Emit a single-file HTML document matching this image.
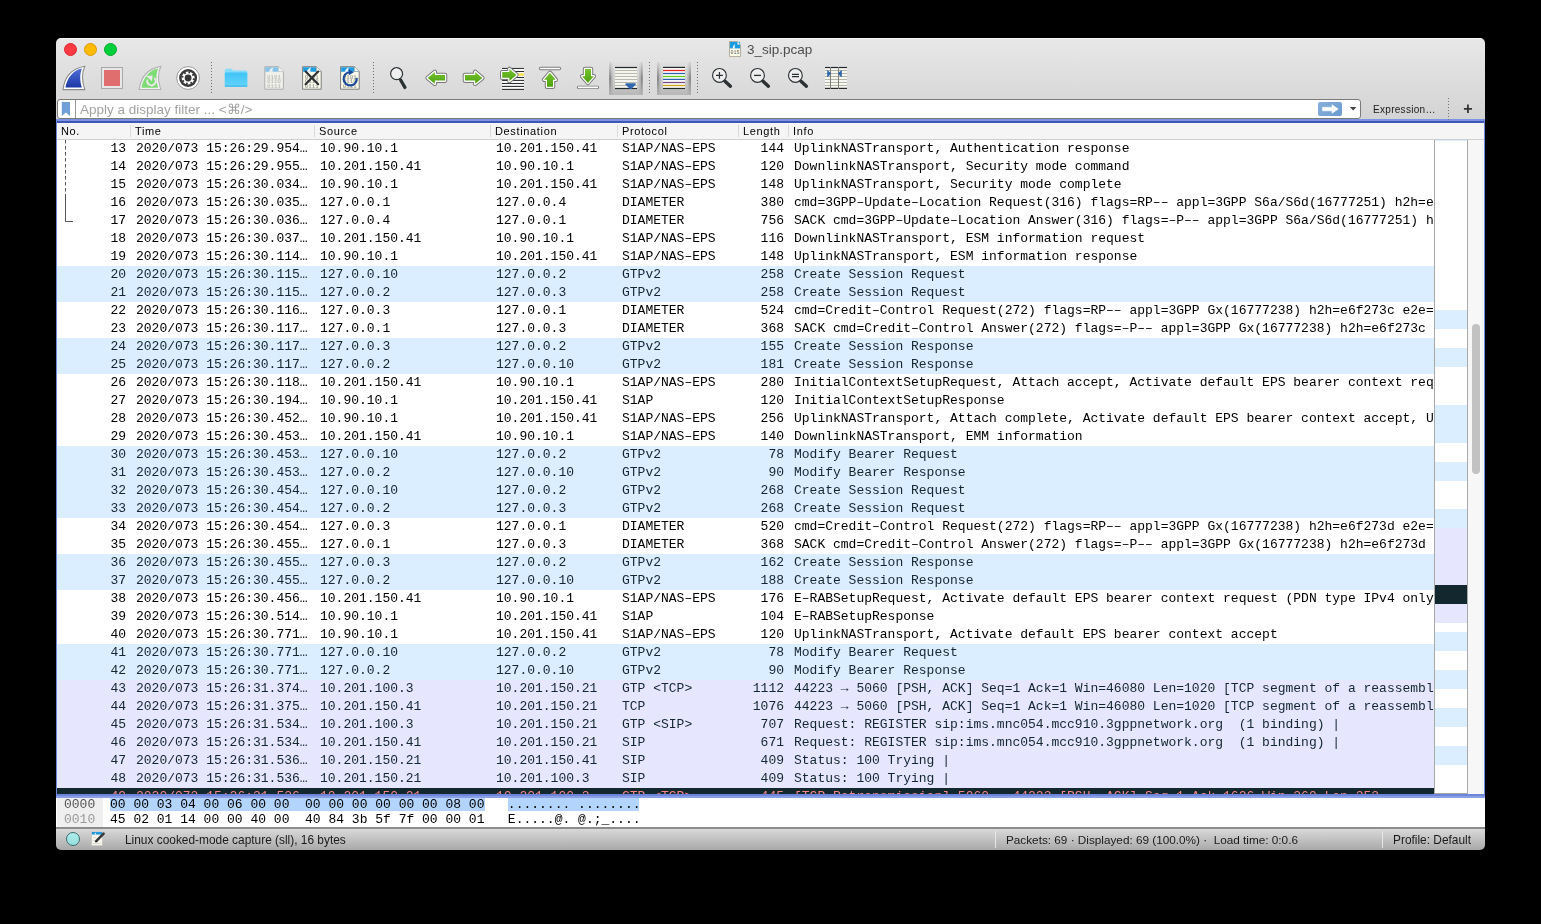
<!DOCTYPE html>
<html><head><meta charset="utf-8"><style>
html,body{margin:0;padding:0}
body{-webkit-font-smoothing:antialiased;width:1541px;height:924px;background:#000;position:relative;overflow:hidden;font-family:"Liberation Sans",sans-serif}
.abs{position:absolute}
#win{will-change:transform;position:absolute;left:0;top:0;width:1541px;height:924px;clip-path:inset(38px 56px 74px 56px round 5px);background:#fff}
#tb{position:absolute;left:56px;top:38px;width:1429px;height:82px;background:linear-gradient(#e8e8e8,#d3d3d3)}
#plist{position:absolute;left:57px;top:140px;width:1377px;height:654px;overflow:hidden;background:#fff}
.r{position:absolute;left:0;width:1377px;height:18px;font:13px/18px "Liberation Mono",monospace;white-space:pre}
.r span{position:absolute;top:0}
.no{right:1308px;text-align:right}
.ln{right:650px;text-align:right}
.hd{position:absolute;top:123px;font-size:11px;letter-spacing:0.65px;line-height:17px;color:#000;white-space:pre}
.hsep{position:absolute;top:125px;width:1px;height:12px;background:#dadada}
.mono{font-family:"Liberation Mono",monospace}
</style></head><body>
<div id="win">
 <div id="tb"></div>
 <div class="abs" style="left:56px;top:38px;width:1429px;height:1px;background:#f6f6f6"></div>
 <!-- title -->
 <div class="abs" style="left:747px;top:42px;font-size:13.5px;line-height:16px;color:#4d4d4d">3_sip.pcap</div>
 <!-- traffic lights -->
 <div class="abs" style="left:64px;top:43px;width:11px;height:11px;border-radius:50%;background:#fe3b45;border:0.5px solid #e2242c"></div>
 <div class="abs" style="left:84px;top:43px;width:11px;height:11px;border-radius:50%;background:#ffbb00;border:0.5px solid #e09a00"></div>
 <div class="abs" style="left:104px;top:43px;width:11px;height:11px;border-radius:50%;background:#00cf3c;border:0.5px solid #00a82a"></div>

 <!-- filter bar -->
 <div class="abs" style="left:57px;top:99px;width:1302px;height:18px;background:#fff;border:1px solid #7a7a7a;border-radius:3px"></div>
 <div class="abs" style="left:75px;top:100px;width:1px;height:18px;background:#9a9a9a"></div>
 <div class="abs" style="left:80px;top:101px;font-size:13.5px;line-height:18px;color:#a3a3a3;white-space:pre">Apply a display filter ... &lt;⌘/&gt;</div>
 <div class="abs" style="left:1318px;top:102px;width:24px;height:14px;border-radius:2px;background:linear-gradient(135deg,#8ab0dc,#6c9bd0)"></div>
 <div class="abs" style="left:1373px;top:102px;font-size:10px;letter-spacing:0.3px;line-height:16px;color:#1a1a1a;white-space:pre">Expression…</div>
 <div class="abs" style="left:1468px;top:98px;font-size:16px;line-height:22px;font-weight:bold;color:#333;transform:translateX(-50%)">+</div>

 <!-- focus ring -->
 <div class="abs" style="left:56px;top:119px;width:1429px;height:2px;background:#7b93e4"></div>
 <div class="abs" style="left:56px;top:121px;width:1429px;height:2px;background:#3f58b5"></div>
 <div class="abs" style="left:56px;top:121px;width:1px;height:677px;background:#6f88dc"></div>
 <div class="abs" style="left:1484px;top:121px;width:1px;height:677px;background:#6f88dc"></div>

 <!-- header -->
 <div class="abs" style="left:57px;top:123px;width:1427px;height:16px;background:#f5f5f5"></div>
 <div class="abs" style="left:57px;top:139px;width:1427px;height:1px;background:#cfcfcf"></div>
 <div class="hd" style="left:61px">No.</div>
 <div class="hd" style="left:135px">Time</div>
 <div class="hd" style="left:319px">Source</div>
 <div class="hd" style="left:495px">Destination</div>
 <div class="hd" style="left:622px">Protocol</div>
 <div class="hd" style="left:743px">Length</div>
 <div class="hd" style="left:793px">Info</div>
 <div class="hsep" style="left:130px"></div>
 <div class="hsep" style="left:314px"></div>
 <div class="hsep" style="left:490px"></div>
 <div class="hsep" style="left:617px"></div>
 <div class="hsep" style="left:738px"></div>
 <div class="hsep" style="left:788px"></div>

 <!-- packet list -->
 <div id="plist">
<div class="r" style="top:0px;background:#ffffff;color:#000000"><span class="no">13</span><span class="c" style="left:79px">2020/073 15:26:29.954…</span><span class="c" style="left:263px">10.90.10.1</span><span class="c" style="left:439px">10.201.150.41</span><span class="c" style="left:565px">S1AP/NAS–EPS</span><span class="ln">144</span><span class="c" style="left:737px">UplinkNASTransport, Authentication response</span></div>
<div class="r" style="top:18px;background:#ffffff;color:#000000"><span class="no">14</span><span class="c" style="left:79px">2020/073 15:26:29.955…</span><span class="c" style="left:263px">10.201.150.41</span><span class="c" style="left:439px">10.90.10.1</span><span class="c" style="left:565px">S1AP/NAS–EPS</span><span class="ln">120</span><span class="c" style="left:737px">DownlinkNASTransport, Security mode command</span></div>
<div class="r" style="top:36px;background:#ffffff;color:#000000"><span class="no">15</span><span class="c" style="left:79px">2020/073 15:26:30.034…</span><span class="c" style="left:263px">10.90.10.1</span><span class="c" style="left:439px">10.201.150.41</span><span class="c" style="left:565px">S1AP/NAS–EPS</span><span class="ln">148</span><span class="c" style="left:737px">UplinkNASTransport, Security mode complete</span></div>
<div class="r" style="top:54px;background:#ffffff;color:#000000"><span class="no">16</span><span class="c" style="left:79px">2020/073 15:26:30.035…</span><span class="c" style="left:263px">127.0.0.1</span><span class="c" style="left:439px">127.0.0.4</span><span class="c" style="left:565px">DIAMETER</span><span class="ln">380</span><span class="c" style="left:737px">cmd=3GPP–Update–Location Request(316) flags=RP–– appl=3GPP S6a/S6d(16777251) h2h=e6f273b e2e=</span></div>
<div class="r" style="top:72px;background:#ffffff;color:#000000"><span class="no">17</span><span class="c" style="left:79px">2020/073 15:26:30.036…</span><span class="c" style="left:263px">127.0.0.4</span><span class="c" style="left:439px">127.0.0.1</span><span class="c" style="left:565px">DIAMETER</span><span class="ln">756</span><span class="c" style="left:737px">SACK cmd=3GPP–Update–Location Answer(316) flags=–P–– appl=3GPP S6a/S6d(16777251) h2h=e6f273b</span></div>
<div class="r" style="top:90px;background:#ffffff;color:#000000"><span class="no">18</span><span class="c" style="left:79px">2020/073 15:26:30.037…</span><span class="c" style="left:263px">10.201.150.41</span><span class="c" style="left:439px">10.90.10.1</span><span class="c" style="left:565px">S1AP/NAS–EPS</span><span class="ln">116</span><span class="c" style="left:737px">DownlinkNASTransport, ESM information request</span></div>
<div class="r" style="top:108px;background:#ffffff;color:#000000"><span class="no">19</span><span class="c" style="left:79px">2020/073 15:26:30.114…</span><span class="c" style="left:263px">10.90.10.1</span><span class="c" style="left:439px">10.201.150.41</span><span class="c" style="left:565px">S1AP/NAS–EPS</span><span class="ln">148</span><span class="c" style="left:737px">UplinkNASTransport, ESM information response</span></div>
<div class="r" style="top:126px;background:#daeeff;color:#12272e"><span class="no">20</span><span class="c" style="left:79px">2020/073 15:26:30.115…</span><span class="c" style="left:263px">127.0.0.10</span><span class="c" style="left:439px">127.0.0.2</span><span class="c" style="left:565px">GTPv2</span><span class="ln">258</span><span class="c" style="left:737px">Create Session Request</span></div>
<div class="r" style="top:144px;background:#daeeff;color:#12272e"><span class="no">21</span><span class="c" style="left:79px">2020/073 15:26:30.115…</span><span class="c" style="left:263px">127.0.0.2</span><span class="c" style="left:439px">127.0.0.3</span><span class="c" style="left:565px">GTPv2</span><span class="ln">258</span><span class="c" style="left:737px">Create Session Request</span></div>
<div class="r" style="top:162px;background:#ffffff;color:#000000"><span class="no">22</span><span class="c" style="left:79px">2020/073 15:26:30.116…</span><span class="c" style="left:263px">127.0.0.3</span><span class="c" style="left:439px">127.0.0.1</span><span class="c" style="left:565px">DIAMETER</span><span class="ln">524</span><span class="c" style="left:737px">cmd=Credit–Control Request(272) flags=RP–– appl=3GPP Gx(16777238) h2h=e6f273c e2e=e6f273c</span></div>
<div class="r" style="top:180px;background:#ffffff;color:#000000"><span class="no">23</span><span class="c" style="left:79px">2020/073 15:26:30.117…</span><span class="c" style="left:263px">127.0.0.1</span><span class="c" style="left:439px">127.0.0.3</span><span class="c" style="left:565px">DIAMETER</span><span class="ln">368</span><span class="c" style="left:737px">SACK cmd=Credit–Control Answer(272) flags=–P–– appl=3GPP Gx(16777238) h2h=e6f273c e2e=</span></div>
<div class="r" style="top:198px;background:#daeeff;color:#12272e"><span class="no">24</span><span class="c" style="left:79px">2020/073 15:26:30.117…</span><span class="c" style="left:263px">127.0.0.3</span><span class="c" style="left:439px">127.0.0.2</span><span class="c" style="left:565px">GTPv2</span><span class="ln">155</span><span class="c" style="left:737px">Create Session Response</span></div>
<div class="r" style="top:216px;background:#daeeff;color:#12272e"><span class="no">25</span><span class="c" style="left:79px">2020/073 15:26:30.117…</span><span class="c" style="left:263px">127.0.0.2</span><span class="c" style="left:439px">127.0.0.10</span><span class="c" style="left:565px">GTPv2</span><span class="ln">181</span><span class="c" style="left:737px">Create Session Response</span></div>
<div class="r" style="top:234px;background:#ffffff;color:#000000"><span class="no">26</span><span class="c" style="left:79px">2020/073 15:26:30.118…</span><span class="c" style="left:263px">10.201.150.41</span><span class="c" style="left:439px">10.90.10.1</span><span class="c" style="left:565px">S1AP/NAS–EPS</span><span class="ln">280</span><span class="c" style="left:737px">InitialContextSetupRequest, Attach accept, Activate default EPS bearer context request</span></div>
<div class="r" style="top:252px;background:#ffffff;color:#000000"><span class="no">27</span><span class="c" style="left:79px">2020/073 15:26:30.194…</span><span class="c" style="left:263px">10.90.10.1</span><span class="c" style="left:439px">10.201.150.41</span><span class="c" style="left:565px">S1AP</span><span class="ln">120</span><span class="c" style="left:737px">InitialContextSetupResponse</span></div>
<div class="r" style="top:270px;background:#ffffff;color:#000000"><span class="no">28</span><span class="c" style="left:79px">2020/073 15:26:30.452…</span><span class="c" style="left:263px">10.90.10.1</span><span class="c" style="left:439px">10.201.150.41</span><span class="c" style="left:565px">S1AP/NAS–EPS</span><span class="ln">256</span><span class="c" style="left:737px">UplinkNASTransport, Attach complete, Activate default EPS bearer context accept, UE</span></div>
<div class="r" style="top:288px;background:#ffffff;color:#000000"><span class="no">29</span><span class="c" style="left:79px">2020/073 15:26:30.453…</span><span class="c" style="left:263px">10.201.150.41</span><span class="c" style="left:439px">10.90.10.1</span><span class="c" style="left:565px">S1AP/NAS–EPS</span><span class="ln">140</span><span class="c" style="left:737px">DownlinkNASTransport, EMM information</span></div>
<div class="r" style="top:306px;background:#daeeff;color:#12272e"><span class="no">30</span><span class="c" style="left:79px">2020/073 15:26:30.453…</span><span class="c" style="left:263px">127.0.0.10</span><span class="c" style="left:439px">127.0.0.2</span><span class="c" style="left:565px">GTPv2</span><span class="ln">78</span><span class="c" style="left:737px">Modify Bearer Request</span></div>
<div class="r" style="top:324px;background:#daeeff;color:#12272e"><span class="no">31</span><span class="c" style="left:79px">2020/073 15:26:30.453…</span><span class="c" style="left:263px">127.0.0.2</span><span class="c" style="left:439px">127.0.0.10</span><span class="c" style="left:565px">GTPv2</span><span class="ln">90</span><span class="c" style="left:737px">Modify Bearer Response</span></div>
<div class="r" style="top:342px;background:#daeeff;color:#12272e"><span class="no">32</span><span class="c" style="left:79px">2020/073 15:26:30.454…</span><span class="c" style="left:263px">127.0.0.10</span><span class="c" style="left:439px">127.0.0.2</span><span class="c" style="left:565px">GTPv2</span><span class="ln">268</span><span class="c" style="left:737px">Create Session Request</span></div>
<div class="r" style="top:360px;background:#daeeff;color:#12272e"><span class="no">33</span><span class="c" style="left:79px">2020/073 15:26:30.454…</span><span class="c" style="left:263px">127.0.0.2</span><span class="c" style="left:439px">127.0.0.3</span><span class="c" style="left:565px">GTPv2</span><span class="ln">268</span><span class="c" style="left:737px">Create Session Request</span></div>
<div class="r" style="top:378px;background:#ffffff;color:#000000"><span class="no">34</span><span class="c" style="left:79px">2020/073 15:26:30.454…</span><span class="c" style="left:263px">127.0.0.3</span><span class="c" style="left:439px">127.0.0.1</span><span class="c" style="left:565px">DIAMETER</span><span class="ln">520</span><span class="c" style="left:737px">cmd=Credit–Control Request(272) flags=RP–– appl=3GPP Gx(16777238) h2h=e6f273d e2e=e6f273d</span></div>
<div class="r" style="top:396px;background:#ffffff;color:#000000"><span class="no">35</span><span class="c" style="left:79px">2020/073 15:26:30.455…</span><span class="c" style="left:263px">127.0.0.1</span><span class="c" style="left:439px">127.0.0.3</span><span class="c" style="left:565px">DIAMETER</span><span class="ln">368</span><span class="c" style="left:737px">SACK cmd=Credit–Control Answer(272) flags=–P–– appl=3GPP Gx(16777238) h2h=e6f273d e2e=</span></div>
<div class="r" style="top:414px;background:#daeeff;color:#12272e"><span class="no">36</span><span class="c" style="left:79px">2020/073 15:26:30.455…</span><span class="c" style="left:263px">127.0.0.3</span><span class="c" style="left:439px">127.0.0.2</span><span class="c" style="left:565px">GTPv2</span><span class="ln">162</span><span class="c" style="left:737px">Create Session Response</span></div>
<div class="r" style="top:432px;background:#daeeff;color:#12272e"><span class="no">37</span><span class="c" style="left:79px">2020/073 15:26:30.455…</span><span class="c" style="left:263px">127.0.0.2</span><span class="c" style="left:439px">127.0.0.10</span><span class="c" style="left:565px">GTPv2</span><span class="ln">188</span><span class="c" style="left:737px">Create Session Response</span></div>
<div class="r" style="top:450px;background:#ffffff;color:#000000"><span class="no">38</span><span class="c" style="left:79px">2020/073 15:26:30.456…</span><span class="c" style="left:263px">10.201.150.41</span><span class="c" style="left:439px">10.90.10.1</span><span class="c" style="left:565px">S1AP/NAS–EPS</span><span class="ln">176</span><span class="c" style="left:737px">E–RABSetupRequest, Activate default EPS bearer context request (PDN type IPv4 only)</span></div>
<div class="r" style="top:468px;background:#ffffff;color:#000000"><span class="no">39</span><span class="c" style="left:79px">2020/073 15:26:30.514…</span><span class="c" style="left:263px">10.90.10.1</span><span class="c" style="left:439px">10.201.150.41</span><span class="c" style="left:565px">S1AP</span><span class="ln">104</span><span class="c" style="left:737px">E–RABSetupResponse</span></div>
<div class="r" style="top:486px;background:#ffffff;color:#000000"><span class="no">40</span><span class="c" style="left:79px">2020/073 15:26:30.771…</span><span class="c" style="left:263px">10.90.10.1</span><span class="c" style="left:439px">10.201.150.41</span><span class="c" style="left:565px">S1AP/NAS–EPS</span><span class="ln">120</span><span class="c" style="left:737px">UplinkNASTransport, Activate default EPS bearer context accept</span></div>
<div class="r" style="top:504px;background:#daeeff;color:#12272e"><span class="no">41</span><span class="c" style="left:79px">2020/073 15:26:30.771…</span><span class="c" style="left:263px">127.0.0.10</span><span class="c" style="left:439px">127.0.0.2</span><span class="c" style="left:565px">GTPv2</span><span class="ln">78</span><span class="c" style="left:737px">Modify Bearer Request</span></div>
<div class="r" style="top:522px;background:#daeeff;color:#12272e"><span class="no">42</span><span class="c" style="left:79px">2020/073 15:26:30.771…</span><span class="c" style="left:263px">127.0.0.2</span><span class="c" style="left:439px">127.0.0.10</span><span class="c" style="left:565px">GTPv2</span><span class="ln">90</span><span class="c" style="left:737px">Modify Bearer Response</span></div>
<div class="r" style="top:540px;background:#e7e6ff;color:#12272e"><span class="no">43</span><span class="c" style="left:79px">2020/073 15:26:31.374…</span><span class="c" style="left:263px">10.201.100.3</span><span class="c" style="left:439px">10.201.150.21</span><span class="c" style="left:565px">GTP &lt;TCP&gt;</span><span class="ln">1112</span><span class="c" style="left:737px">44223 → 5060 [PSH, ACK] Seq=1 Ack=1 Win=46080 Len=1020 [TCP segment of a reassembled PDU]</span></div>
<div class="r" style="top:558px;background:#e7e6ff;color:#12272e"><span class="no">44</span><span class="c" style="left:79px">2020/073 15:26:31.375…</span><span class="c" style="left:263px">10.201.150.41</span><span class="c" style="left:439px">10.201.150.21</span><span class="c" style="left:565px">TCP</span><span class="ln">1076</span><span class="c" style="left:737px">44223 → 5060 [PSH, ACK] Seq=1 Ack=1 Win=46080 Len=1020 [TCP segment of a reassembled PDU]</span></div>
<div class="r" style="top:576px;background:#e7e6ff;color:#12272e"><span class="no">45</span><span class="c" style="left:79px">2020/073 15:26:31.534…</span><span class="c" style="left:263px">10.201.100.3</span><span class="c" style="left:439px">10.201.150.21</span><span class="c" style="left:565px">GTP &lt;SIP&gt;</span><span class="ln">707</span><span class="c" style="left:737px">Request: REGISTER sip:ims.mnc054.mcc910.3gppnetwork.org  (1 binding) |</span></div>
<div class="r" style="top:594px;background:#e7e6ff;color:#12272e"><span class="no">46</span><span class="c" style="left:79px">2020/073 15:26:31.534…</span><span class="c" style="left:263px">10.201.150.41</span><span class="c" style="left:439px">10.201.150.21</span><span class="c" style="left:565px">SIP</span><span class="ln">671</span><span class="c" style="left:737px">Request: REGISTER sip:ims.mnc054.mcc910.3gppnetwork.org  (1 binding) |</span></div>
<div class="r" style="top:612px;background:#e7e6ff;color:#12272e"><span class="no">47</span><span class="c" style="left:79px">2020/073 15:26:31.536…</span><span class="c" style="left:263px">10.201.150.21</span><span class="c" style="left:439px">10.201.150.41</span><span class="c" style="left:565px">SIP</span><span class="ln">409</span><span class="c" style="left:737px">Status: 100 Trying |</span></div>
<div class="r" style="top:630px;background:#e7e6ff;color:#12272e"><span class="no">48</span><span class="c" style="left:79px">2020/073 15:26:31.536…</span><span class="c" style="left:263px">10.201.150.21</span><span class="c" style="left:439px">10.201.100.3</span><span class="c" style="left:565px">SIP</span><span class="ln">409</span><span class="c" style="left:737px">Status: 100 Trying |</span></div>
<div class="r" style="top:648px;background:#12272e;color:#f78787"><span class="no">49</span><span class="c" style="left:79px">2020/073 15:26:31.536…</span><span class="c" style="left:263px">10.201.150.21</span><span class="c" style="left:439px">10.201.100.3</span><span class="c" style="left:565px">GTP &lt;TCP&gt;</span><span class="ln">445</span><span class="c" style="left:737px">[TCP Retransmission] 5060 → 44223 [PSH, ACK] Seq=1 Ack=1626 Win=360 Len=353</span></div>
  <svg class="abs" style="left:0;top:0" width="30" height="100">
   <line x1="8.5" y1="0" x2="8.5" y2="53" stroke="#555" stroke-width="1" stroke-dasharray="3.5,2.5"/>
   <path d="M8.5 54 V81.5 H16" fill="none" stroke="#555" stroke-width="1"/>
  </svg>
 </div>

 <!-- minimap -->
 <div class="abs" style="left:1434px;top:140px;width:1px;height:654px;background:#a9a9a9"></div>
 <div class="abs" style="left:1467px;top:140px;width:1px;height:654px;background:#a9a9a9"></div>
 <div class="abs" style="left:1435px;top:140px;width:32px;height:653px;background:#fff;overflow:hidden">
<div style="position:absolute;left:0;top:0.0px;width:32px;height:1.0px;background:#daeeff"></div>
<div style="position:absolute;left:0;top:170.0px;width:32px;height:18.7px;background:#daeeff"></div>
<div style="position:absolute;left:0;top:208.0px;width:32px;height:19.0px;background:#daeeff"></div>
<div style="position:absolute;left:0;top:265.0px;width:32px;height:37.7px;background:#daeeff"></div>
<div style="position:absolute;left:0;top:322.0px;width:32px;height:18.8px;background:#daeeff"></div>
<div style="position:absolute;left:0;top:369.2px;width:32px;height:18.8px;background:#daeeff"></div>
<div style="position:absolute;left:0;top:388.0px;width:32px;height:57.0px;background:#e7e6ff"></div>
<div style="position:absolute;left:0;top:445.0px;width:32px;height:18.8px;background:#12272e"></div>
<div style="position:absolute;left:0;top:463.8px;width:32px;height:19.1px;background:#e7e6ff"></div>
<div style="position:absolute;left:0;top:492.0px;width:32px;height:18.8px;background:#daeeff"></div>
<div style="position:absolute;left:0;top:530.0px;width:32px;height:19.2px;background:#daeeff"></div>
<div style="position:absolute;left:0;top:568.0px;width:32px;height:18.8px;background:#daeeff"></div>
<div style="position:absolute;left:0;top:606.0px;width:32px;height:19.0px;background:#daeeff"></div>
 </div>
 <div class="abs" style="left:1435px;top:793px;width:33px;height:1px;background:#a9a9a9"></div>
 <div class="abs" style="left:1468px;top:140px;width:16px;height:654px;background:#f7f7f7"></div>
 <div class="abs" style="left:1472px;top:324px;width:8px;height:150px;border-radius:4px;background:#c2c2c2"></div>

 <!-- bottom focus ring -->
 <div class="abs" style="left:56px;top:794px;width:1429px;height:2px;background:#6d86dc"></div>
 <div class="abs" style="left:56px;top:796px;width:1429px;height:2px;background:#8aa0e6"></div>

 <!-- bytes pane -->
 <div class="abs" style="left:57px;top:798px;width:46px;height:29px;background:#efefef"></div>
 <div class="abs" style="left:110px;top:798px;width:375px;height:13px;background:#b3d5fd"></div>
 <div class="abs" style="left:508px;top:798px;width:131px;height:13px;background:#b3d5fd"></div>
 <div class="abs mono" style="left:64px;top:797px;font-size:13px;line-height:15px;white-space:pre;color:#555">0000</div>
 <div class="abs mono" style="left:64px;top:812px;font-size:13px;line-height:15px;white-space:pre;color:#9a9a9a">0010</div>
 <div class="abs mono" style="left:110px;top:797px;font-size:13px;line-height:15px;white-space:pre;color:#000">00 00 03 04 00 06 00 00  00 00 00 00 00 00 08 00   ........ ........</div>
 <div class="abs mono" style="left:110px;top:812px;font-size:13px;line-height:15px;white-space:pre;color:#000">45 02 01 14 00 00 40 00  40 84 3b 5f 7f 00 00 01   E.....@. @.;_....</div>

 <!-- status bar -->
 <div class="abs" style="left:56px;top:827px;width:1429px;height:2px;background:#8c8c8c"></div>
 <div class="abs" style="left:56px;top:829px;width:1429px;height:21px;background:linear-gradient(#d9d9d9,#a9a9a9)"></div>
 <div class="abs" style="left:66px;top:832px;width:12px;height:12px;border-radius:50%;background:linear-gradient(#b0ecec,#94dfdf);border:1px solid #3f6e6e"></div>
 <div class="abs" style="left:125px;top:832px;font-size:11.9px;line-height:16px;color:#1a1a1a;white-space:pre">Linux cooked-mode capture (sll), 16 bytes</div>
 <div class="abs" style="left:995px;top:831px;width:1px;height:17px;background:#e6e6e6"></div>
 <div class="abs" style="left:1006px;top:832px;font-size:11.75px;line-height:16px;color:#1a1a1a;white-space:pre">Packets: 69 · Displayed: 69 (100.0%) ·  Load time: 0:0.6</div>
 <div class="abs" style="left:1382px;top:831px;width:1px;height:17px;background:#e6e6e6"></div>
 <div class="abs" style="left:1393px;top:832px;font-size:11.9px;line-height:16px;color:#1a1a1a;white-space:pre">Profile: Default</div>

 <!-- toolbar icons -->
 <svg class="abs" style="left:0;top:0" width="1541" height="924" id="icons">
 <defs>
  <linearGradient id="gBlue" x1="0" y1="0" x2="0" y2="1"><stop offset="0" stop-color="#4f6fd6"/><stop offset="1" stop-color="#1d36a6"/></linearGradient>
  <linearGradient id="gGreen" x1="0" y1="0" x2="0" y2="1"><stop offset="0" stop-color="#78c232"/><stop offset="1" stop-color="#4ca20c"/></linearGradient>
  <linearGradient id="gPress" x1="0" y1="0" x2="0" y2="1"><stop offset="0" stop-color="#e0e0e0"/><stop offset="0.5" stop-color="#cfcfcf"/><stop offset="1" stop-color="#b8b8b8"/></linearGradient>
  <linearGradient id="gPressSide" x1="0" y1="0" x2="0" y2="1"><stop offset="0" stop-color="#000" stop-opacity="0.05"/><stop offset="0.5" stop-color="#000" stop-opacity="0.4"/><stop offset="1" stop-color="#000" stop-opacity="0.05"/></linearGradient>
  <linearGradient id="gFolder" x1="0" y1="0" x2="0" y2="1"><stop offset="0" stop-color="#3ec4f7"/><stop offset="1" stop-color="#66d3fc"/></linearGradient>
 </defs>
 <!-- 1 blue fin -->
 <path d="M63,89.6 C64.5,77 72,68.5 84.8,66.2 C81.8,72.5 81.5,80 84.8,89.6 Z" fill="#fff" stroke="#8c8c8c" stroke-width="1.1"/>
 <path d="M65.4,87.6 C67,77.5 73.5,70 81.9,68.4 C79.8,73.5 79.6,80.5 81.9,87.6 Z" fill="url(#gBlue)"/>
 <!-- 2 stop -->
 <rect x="101.5" y="67.5" width="21" height="21" fill="#e8e6e6" stroke="#a9a9a9" stroke-width="1"/>
 <rect x="104" y="70" width="16" height="16" fill="#e06e6e"/>
 <!-- 3 green fin -->
 <path d="M139.2,89.5 C140.7,77 148,68.7 160.8,66.4 C157.8,72.7 157.5,80 160.8,89.5 Z" fill="#f2f0f2" stroke="#b3b3b3" stroke-width="1.1"/>
 <path d="M141.5,87.7 C143,77.5 149.5,70 158.1,68.4 C156,73.5 155.8,80.5 158.1,87.7 Z" fill="#7ddd74"/>
 <path d="M147.6,79.5 A4.2,4.2 0 1 0 154.3,78" fill="none" stroke="#efe9ef" stroke-width="1.8"/>
 <path d="M146.2,76 L152.6,75.4 L152,81.2 Z" fill="#efe9ef"/>
 <!-- 4 gear -->
 <circle cx="188.1" cy="78" r="11.4" fill="#fff" stroke="#9a9a9a" stroke-width="1"/>
 <circle cx="188.1" cy="78" r="9" fill="#3a3a3a"/>
 <g transform="translate(188.1,78)"><circle r="6.5" fill="#fff"/><rect x="-0.9" y="-7" width="1.8" height="2.2" rx="0.5" fill="#3a3a3a" transform="rotate(12.3)"/><rect x="-0.9" y="-7" width="1.8" height="2.2" rx="0.5" fill="#3a3a3a" transform="rotate(57.3)"/><rect x="-0.9" y="-7" width="1.8" height="2.2" rx="0.5" fill="#3a3a3a" transform="rotate(102.3)"/><rect x="-0.9" y="-7" width="1.8" height="2.2" rx="0.5" fill="#3a3a3a" transform="rotate(147.3)"/><rect x="-0.9" y="-7" width="1.8" height="2.2" rx="0.5" fill="#3a3a3a" transform="rotate(192.3)"/><rect x="-0.9" y="-7" width="1.8" height="2.2" rx="0.5" fill="#3a3a3a" transform="rotate(237.3)"/><rect x="-0.9" y="-7" width="1.8" height="2.2" rx="0.5" fill="#3a3a3a" transform="rotate(282.3)"/><rect x="-0.9" y="-7" width="1.8" height="2.2" rx="0.5" fill="#3a3a3a" transform="rotate(327.3)"/></g>
 <circle cx="188.1" cy="78" r="3.4" fill="#353535"/>
 <!-- separators -->
 <line x1="211.5" y1="62" x2="211.5" y2="94" stroke="#6e6e6e" stroke-width="1" stroke-dasharray="1,2"/>
 <line x1="373.5" y1="62" x2="373.5" y2="94" stroke="#6e6e6e" stroke-width="1" stroke-dasharray="1,2"/>
 <line x1="649.5" y1="62" x2="649.5" y2="94" stroke="#6e6e6e" stroke-width="1" stroke-dasharray="1,2"/>
 <line x1="697.5" y1="62" x2="697.5" y2="94" stroke="#6e6e6e" stroke-width="1" stroke-dasharray="1,2"/>
 <!-- 5 folder -->
 <path d="M224.8,70.3 Q224.8,68.8 226.3,68.8 L231.5,68.8 L233,70.6 L245.8,70.6 Q247.3,70.6 247.3,72.1 L247.3,85.5 Q247.3,87 245.8,87 L226.3,87 Q224.8,87 224.8,85.5 Z" fill="#86dcfc"/>
 <path d="M224.8,73.5 Q224.8,72.4 226,72.4 L246.1,72.4 Q247.3,72.4 247.3,73.5 L247.3,85.5 Q247.3,87 245.8,87 L226.3,87 Q224.8,87 224.8,85.5 Z" fill="url(#gFolder)"/>
 <rect x="224.8" y="85.2" width="22.5" height="1.8" fill="#3db8ea" opacity="0.6"/>
 <!-- 6 doc faded -->
 <g>
  <path d="M264.8,66.7 L278.6,66.7 L283.4,71.5 L283.4,89.2 L264.8,89.2 Z" fill="#f0f0ea" stroke="#aeaeae" stroke-width="1"/>
  <path d="M265.3,67.2 L278.4,67.2 L282.9,71.7 L265.3,71.7 Z" fill="#86c3e8"/>
  <path d="M269,71.7 C269.5,69.6 271.2,68 273.4,67.6 C272.4,68.8 272.1,70.5 273,71.7 Z" fill="#eef3f6"/>
  <path d="M278.6,66.7 L278.6,71.5 L283.4,71.5" fill="#f5f5f0" stroke="#c8c8c8" stroke-width="0.6"/>
  <text x="274" y="78.6" font-family="Liberation Mono" font-size="5.8" font-weight="bold" fill="#c4c4c0" text-anchor="middle">0101</text>
  <text x="274" y="83.2" font-family="Liberation Mono" font-size="5.8" font-weight="bold" fill="#c4c4c0" text-anchor="middle">0110</text>
  <text x="274" y="87.8" font-family="Liberation Mono" font-size="5.8" font-weight="bold" fill="#c4c4c0" text-anchor="middle">0111</text>
 </g>
 <!-- 7 doc X -->
 <g>
  <path d="M302.6,66.7 L316.4,66.7 L321.2,71.5 L321.2,89.2 L302.6,89.2 Z" fill="#fbfbec" stroke="#7c7c7c" stroke-width="1"/>
  <path d="M303.1,67.2 L316.2,67.2 L320.7,71.7 L303.1,71.7 Z" fill="#1f9be0"/>
  <path d="M306.8,71.7 C307.3,69.6 309,68 311.2,67.6 C310.2,68.8 309.9,70.5 310.8,71.7 Z" fill="#f4f6f8"/>
  <path d="M316.4,66.7 L316.4,71.5 L321.2,71.5" fill="#f5f5e8" stroke="#999" stroke-width="0.6"/>
  <text x="311.8" y="78.6" font-family="Liberation Mono" font-size="5.8" font-weight="bold" fill="#a4a49c" text-anchor="middle">0101</text>
  <text x="311.8" y="83.2" font-family="Liberation Mono" font-size="5.8" font-weight="bold" fill="#a4a49c" text-anchor="middle">0110</text>
  <text x="311.8" y="87.8" font-family="Liberation Mono" font-size="5.8" font-weight="bold" fill="#a4a49c" text-anchor="middle">0111</text>
  <path d="M305.6,71.6 L318.2,84.2 M318.2,71.6 L305.6,84.2" stroke="#2b2f31" stroke-width="2.1" stroke-linecap="round"/>
 </g>
 <!-- 8 doc reload -->
 <g>
  <path d="M340.6,66.7 L354.4,66.7 L359.2,71.5 L359.2,89.2 L340.6,89.2 Z" fill="#fbfbec" stroke="#7c7c7c" stroke-width="1"/>
  <path d="M341.1,67.2 L354.2,67.2 L358.7,71.7 L341.1,71.7 Z" fill="#1f9be0"/>
  <path d="M344.8,71.7 C345.3,69.6 347,68 349.2,67.6 C348.2,68.8 347.9,70.5 348.8,71.7 Z" fill="#f4f6f8"/>
  <path d="M354.4,66.7 L354.4,71.5 L359.2,71.5" fill="#f5f5e8" stroke="#999" stroke-width="0.6"/>
  <text x="349.8" y="78.6" font-family="Liberation Mono" font-size="5.8" font-weight="bold" fill="#a4a49c" text-anchor="middle">0101</text>
  <text x="349.8" y="83.2" font-family="Liberation Mono" font-size="5.8" font-weight="bold" fill="#a4a49c" text-anchor="middle">0110</text>
  <text x="349.8" y="87.8" font-family="Liberation Mono" font-size="5.8" font-weight="bold" fill="#a4a49c" text-anchor="middle">0111</text>
  <path d="M356.7,77.8 A6.6,6.6 0 1 1 349.8,72.2" fill="none" stroke="#1a4a98" stroke-width="2.1"/>
  <path d="M348.6,69.3 L353.8,72.3 L348.9,75.3 Z" fill="#1a4a98"/>
 </g>
 <!-- 9 find -->
 <circle cx="396.6" cy="73.7" r="6" fill="#efefef" stroke="#2e3336" stroke-width="1.2"/>
 <path d="M393.2,70.8 Q394.5,69 396.8,68.9" fill="none" stroke="#fff" stroke-width="0.8"/>
 <path d="M400.6,80 L404.9,87.4" stroke="#2b3033" stroke-width="3.3" stroke-linecap="round"/>
 <!-- 10 left arrow -->
 <g stroke-linejoin="round">
  <path d="M427.7,77.9 L434.8,72 L434.8,75 L445,75 L445,80.6 L434.8,80.6 L434.8,83.8 Z" fill="none" stroke="#7a7a7a" stroke-width="4.6"/>
  <path d="M427.7,77.9 L434.8,72 L434.8,75 L445,75 L445,80.6 L434.8,80.6 L434.8,83.8 Z" fill="none" stroke="#fff" stroke-width="2.6"/>
  <path d="M427.7,77.9 L434.8,72 L434.8,75 L445,75 L445,80.6 L434.8,80.6 L434.8,83.8 Z" fill="url(#gGreen)"/>
 </g>
 <!-- 11 right arrow -->
 <g stroke-linejoin="round">
  <path d="M482.3,77.9 L475.2,72 L475.2,75 L465,75 L465,80.6 L475.2,80.6 L475.2,83.8 Z" fill="none" stroke="#7a7a7a" stroke-width="4.6"/>
  <path d="M482.3,77.9 L475.2,72 L475.2,75 L465,75 L465,80.6 L475.2,80.6 L475.2,83.8 Z" fill="none" stroke="#fff" stroke-width="2.6"/>
  <path d="M482.3,77.9 L475.2,72 L475.2,75 L465,75 L465,80.6 L475.2,80.6 L475.2,83.8 Z" fill="url(#gGreen)"/>
 </g>
 <!-- 12 go to packet -->
 <rect x="502" y="67.5" width="22" height="22.5" fill="#fff"/>
 <g stroke="#2b2f31" stroke-width="1.1">
  <line x1="502" y1="68.4" x2="524" y2="68.4"/><line x1="502" y1="71.5" x2="524" y2="71.5"/>
  <line x1="502" y1="77.5" x2="524" y2="77.5"/><line x1="502" y1="80.4" x2="524" y2="80.4"/>
  <line x1="502" y1="83.5" x2="524" y2="83.5"/><line x1="502" y1="86.4" x2="524" y2="86.4"/><line x1="502" y1="89.4" x2="524" y2="89.4"/>
 </g>
 <rect x="502" y="73.3" width="22" height="2.5" fill="#f6e04a"/>
 <g stroke-linejoin="round">
  <path d="M516.4,75 L509.4,68.9 L509.4,72.1 L502.2,72.1 L502.2,77.8 L509.4,77.8 L509.4,81 Z" fill="none" stroke="#7a7a7a" stroke-width="4.4"/>
  <path d="M516.4,75 L509.4,68.9 L509.4,72.1 L502.2,72.1 L502.2,77.8 L509.4,77.8 L509.4,81 Z" fill="none" stroke="#fff" stroke-width="2.4"/>
  <path d="M516.4,75 L509.4,68.9 L509.4,72.1 L502.2,72.1 L502.2,77.8 L509.4,77.8 L509.4,81 Z" fill="url(#gGreen)"/>
 </g>
 <!-- 13 first packet -->
 <g stroke-linejoin="round" stroke-linecap="round">
  <line x1="540.6" y1="68.5" x2="559.4" y2="68.5" stroke="#7a7a7a" stroke-width="3.4"/>
  <line x1="540.6" y1="68.5" x2="559.4" y2="68.5" stroke="#fff" stroke-width="1.6"/>
  <path d="M549.9,72.8 L544.1,79.7 L547,79.7 L547,86.8 L553,86.8 L553,79.7 L555.8,79.7 Z" fill="none" stroke="#7a7a7a" stroke-width="4.4"/>
  <path d="M549.9,72.8 L544.1,79.7 L547,79.7 L547,86.8 L553,86.8 L553,79.7 L555.8,79.7 Z" fill="none" stroke="#fff" stroke-width="2.4"/>
  <path d="M549.9,72.8 L544.1,79.7 L547,79.7 L547,86.8 L553,86.8 L553,79.7 L555.8,79.7 Z" fill="url(#gGreen)"/>
 </g>
 <!-- 14 last packet -->
 <g stroke-linejoin="round" stroke-linecap="round">
  <line x1="578.6" y1="87.4" x2="597.4" y2="87.4" stroke="#7a7a7a" stroke-width="3.4"/>
  <line x1="578.6" y1="87.4" x2="597.4" y2="87.4" stroke="#fff" stroke-width="1.6"/>
  <path d="M587.9,82.9 L582.1,76.2 L585,76.2 L585,69 L591,69 L591,76.2 L593.8,76.2 Z" fill="none" stroke="#7a7a7a" stroke-width="4.4"/>
  <path d="M587.9,82.9 L582.1,76.2 L585,76.2 L585,69 L591,69 L591,76.2 L593.8,76.2 Z" fill="none" stroke="#fff" stroke-width="2.4"/>
  <path d="M587.9,82.9 L582.1,76.2 L585,76.2 L585,69 L591,69 L591,76.2 L593.8,76.2 Z" fill="url(#gGreen)"/>
 </g>
 <!-- 15 autoscroll pressed -->
 <rect x="609.2" y="62" width="33.5" height="33" fill="url(#gPress)"/>
 <rect x="609.2" y="62" width="1.6" height="33" fill="url(#gPressSide)"/><rect x="641.1" y="62" width="1.6" height="33" fill="url(#gPressSide)"/><rect x="610.8" y="62" width="1.8" height="33" fill="url(#gPressSide)" opacity="0.4"/><rect x="639.3" y="62" width="1.8" height="33" fill="url(#gPressSide)" opacity="0.4"/>
 <rect x="615" y="67" width="22" height="22" fill="#f4f4f0"/>
 <g stroke="#b9b9ab" stroke-width="1">
  <line x1="615" y1="70.5" x2="637" y2="70.5"/><line x1="615" y1="73.5" x2="637" y2="73.5"/><line x1="615" y1="76.5" x2="637" y2="76.5"/>
  <line x1="615" y1="79.5" x2="637" y2="79.5"/><line x1="615" y1="82.5" x2="637" y2="82.5"/><line x1="615" y1="85.5" x2="637" y2="85.5"/>
 </g>
 <line x1="615" y1="67.5" x2="637" y2="67.5" stroke="#23282a" stroke-width="1.2"/>
 <line x1="615" y1="88.5" x2="637" y2="88.5" stroke="#23282a" stroke-width="1.2"/>
 <path d="M625.2,84.2 Q625.2,83.2 626.5,83.2 L634.7,83.2 Q636,83.2 636,84.2 L631.6,88.8 Q630.6,89.6 629.6,88.8 Z" fill="#2f67ae"/>
 <!-- 16 colorize pressed -->
 <rect x="657.1" y="62" width="33.8" height="33" fill="url(#gPress)"/>
 <rect x="657.1" y="62" width="1.6" height="33" fill="url(#gPressSide)"/><rect x="689.3" y="62" width="1.6" height="33" fill="url(#gPressSide)"/><rect x="658.7" y="62" width="1.8" height="33" fill="url(#gPressSide)" opacity="0.4"/><rect x="687.5" y="62" width="1.8" height="33" fill="url(#gPressSide)" opacity="0.4"/>
 <rect x="663" y="66.5" width="22" height="22.8" fill="#fff"/>
 <g stroke-width="1.3">
  <line x1="663" y1="67.4" x2="685" y2="67.4" stroke="#23282a"/>
  <line x1="663" y1="70.5" x2="685" y2="70.5" stroke="#e82222"/>
  <line x1="663" y1="73.5" x2="685" y2="73.5" stroke="#2e62ae"/>
  <line x1="663" y1="76.5" x2="685" y2="76.5" stroke="#62cc12"/>
  <line x1="663" y1="79.4" x2="685" y2="79.4" stroke="#2e62ae"/>
  <line x1="663" y1="82.5" x2="685" y2="82.5" stroke="#774a86"/>
  <line x1="663" y1="85.5" x2="685" y2="85.5" stroke="#c9a00e"/>
  <line x1="663" y1="88.5" x2="685" y2="88.5" stroke="#23282a"/>
 </g>
 <!-- 17-19 zoom -->
 <g>
  <circle cx="719.45" cy="75.4" r="6.9" fill="#eeeeee" stroke="#2e3336" stroke-width="1.15"/>
  <path d="M725,81.2 L730.4,86.2" stroke="#2b3033" stroke-width="3.4" stroke-linecap="round"/>
  <path d="M716,75.4 H722.9 M719.45,72 V78.8" stroke="#2b3033" stroke-width="1.2"/>
 </g>
 <g>
  <circle cx="757.5" cy="75.4" r="6.9" fill="#eeeeee" stroke="#2e3336" stroke-width="1.15"/>
  <path d="M763,81.2 L768.4,86.2" stroke="#2b3033" stroke-width="3.4" stroke-linecap="round"/>
  <path d="M754,75.4 H761" stroke="#2b3033" stroke-width="1.3"/>
 </g>
 <g>
  <circle cx="795.4" cy="75.4" r="6.9" fill="#eeeeee" stroke="#2e3336" stroke-width="1.15"/>
  <path d="M801,81.2 L806.4,86.2" stroke="#2b3033" stroke-width="3.4" stroke-linecap="round"/>
  <path d="M792,74.4 H799 M792,76.6 H799" stroke="#2b3033" stroke-width="1.1"/>
 </g>
 <!-- 20 resize columns -->
 <rect x="825" y="67" width="22" height="22" fill="#f6f6f2"/>
 <g stroke="#b5b5a6" stroke-width="1">
  <line x1="825" y1="70.5" x2="847" y2="70.5"/><line x1="825" y1="73.5" x2="847" y2="73.5"/><line x1="825" y1="76.5" x2="847" y2="76.5"/>
  <line x1="825" y1="79.5" x2="847" y2="79.5"/><line x1="825" y1="82.5" x2="847" y2="82.5"/><line x1="825" y1="85.5" x2="847" y2="85.5"/>
 </g>
 <g stroke="#23282a" stroke-width="1.2">
  <line x1="825" y1="67.5" x2="830" y2="67.5"/><line x1="831" y1="67.5" x2="838" y2="67.5"/><line x1="839" y1="67.5" x2="847" y2="67.5"/>
  <line x1="825" y1="88.4" x2="830" y2="88.4"/><line x1="831" y1="88.4" x2="838" y2="88.4"/><line x1="839" y1="88.4" x2="847" y2="88.4"/>
 </g>
 <line x1="830.5" y1="67" x2="830.5" y2="89" stroke="#7e7e7a" stroke-width="1"/>
 <line x1="838.5" y1="67" x2="838.5" y2="89" stroke="#7e7e7a" stroke-width="1"/>
 <path d="M827.2,70.6 Q827.2,70 828,70.4 L831.2,73.6 L828,77 Q827.2,77.3 827.2,76.6 Z" fill="#2f67ae"/>
 <path d="M841.8,70.6 Q841.8,70 841,70.4 L837.8,73.6 L841,77 Q841.8,77.3 841.8,76.6 Z" fill="#2f67ae"/>
 <!-- title doc icon -->
 <g>
  <path d="M729.5,41.5 L737.5,41.5 L740.5,44.5 L740.5,56.5 L729.5,56.5 Z" fill="#fbfbe8" stroke="#a8a08c" stroke-width="0.8"/>
  <rect x="729.9" y="41.9" width="10.2" height="6.5" fill="#1c9ce0"/>
  <path d="M732.6,48.4 C733,46 734,44.6 735.3,44.3 C734.6,45.6 734.6,47 735,48.4 Z" fill="#f2f5f8"/>
  <path d="M737.5,41.5 L737.5,44.5 L740.5,44.5 Z" fill="#f6f3e0"/>
  <text x="735" y="54.2" font-family="Liberation Mono" font-size="5" fill="#666" text-anchor="middle">01S</text>
 </g>
 <!-- bookmark -->
 <path d="M61.8,102 L70,102 L70,116 L65.9,112.6 L61.8,116 Z" fill="#6f9fd6"/>
 <!-- filter apply arrow -->
 <path d="M1322.5,107.3 L1332,107.3 L1332,104.8 L1338.2,109 L1332,113.2 L1332,110.8 L1322.5,110.8 Z" fill="#fff" stroke="#fff" stroke-width="0.6" stroke-linejoin="round"/>
 <path d="M1349.8,107 L1356.4,107 L1353.1,110.6 Z" fill="#444"/>
 <!-- dotted sep near + -->
 <line x1="1448.5" y1="98" x2="1448.5" y2="120" stroke="#777" stroke-width="1" stroke-dasharray="1,2"/>

 <!-- status edit icon -->
 <g>
  <rect x="91.8" y="832" width="10.4" height="13.5" fill="#f6f6ee" stroke="#c8c8c0" stroke-width="0.5"/>
  <rect x="91.8" y="832" width="10.4" height="2.6" fill="#2398dc"/>
  <path d="M94.5,834.6 C94.8,833.5 95.4,832.8 96.2,832.6 C95.8,833.3 95.8,834 96,834.6 Z" fill="#f4f4f4"/>
  <g stroke="#c8c8c0" stroke-width="0.6"><line x1="93" y1="837.5" x2="96" y2="837.5"/><line x1="93" y1="840.5" x2="95" y2="840.5"/><line x1="93" y1="843.5" x2="101" y2="843.5"/></g>
  <path d="M96.2,841.2 L103.6,833.6" stroke="#3a3a3a" stroke-width="2.6" stroke-linecap="round"/>
  <path d="M95.4,842 L96.6,840.2 L97.6,841.2 Z" fill="#111"/>
 </g>

</svg>
</div>
</body></html>
